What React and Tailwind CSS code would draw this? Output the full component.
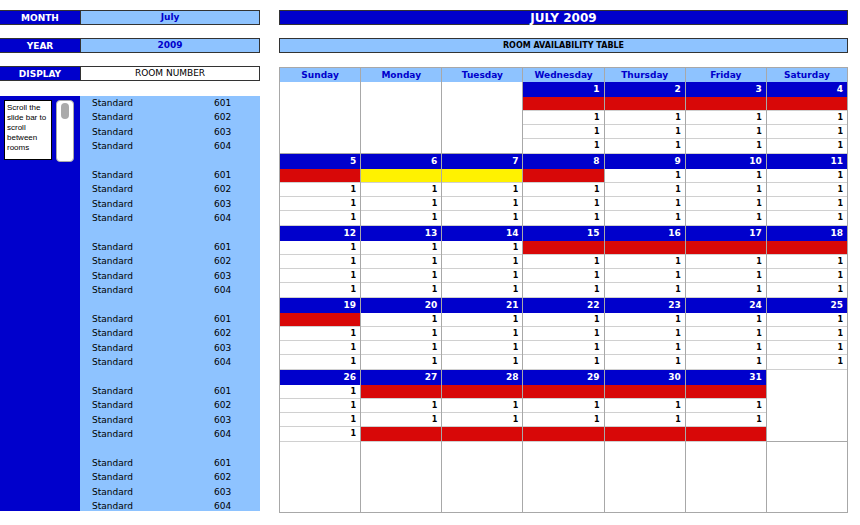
import React from "react";

const F = { fontFamily: '"DejaVu Sans", Verdana, sans-serif' };
const weeks = [
  [null, null, null, 1, 2, 3, 4],
  [5, 6, 7, 8, 9, 10, 11],
  [12, 13, 14, 15, 16, 17, 18],
  [19, 20, 21, 22, 23, 24, 25],
  [26, 27, 28, 29, 30, 31, null],
];
const days = ["Sunday", "Monday", "Tuesday", "Wednesday", "Thursday", "Friday", "Saturday"];

function status(d, r) {
  if (r === 0) {
    if ([1, 2, 3, 4, 5, 8, 15, 16, 17, 18, 19, 27, 28, 29, 30, 31].includes(d)) return "red";
    if (d === 6 || d === 7) return "yellow";
  }
  if (r === 3 && d >= 27) return "red";
  return "1";
}

function DayCell({ d }) {
  if (d === null) return <div className="h-[72px] bg-white border-r border-b border-[#a8a8a8]" />;
  return (
    <div className="h-[72px] flex flex-col border-r border-[#a8a8a8]">
      <div className="h-[15px] bg-[#0000cc] text-white text-[9px] font-bold text-right pr-1 leading-[15px]">{d}</div>
      {[0, 1, 2, 3].map((r) => {
        const s = status(d, r);
        const bg = s === "red" ? "bg-[#d80808]" : s === "yellow" ? "bg-[#fff200]" : "bg-white";
        return (
          <div key={r} className={`${r === 3 ? "h-[15px]" : "h-[14px]"} ${bg} text-[8px] font-bold text-right pr-1 leading-[14px] text-black border-b border-[#d0d0d0]`}>
            {s === "1" ? "1" : ""}
          </div>
        );
      })}
    </div>
  );
}

export default function App() {
  const groups = [0, 1, 2, 3, 4, 5];
  return (
    <div style={F} className="w-[860px] h-[525px] bg-white flex pt-[10px] overflow-hidden">
      <div className="w-[260px] flex flex-col">
        {[["MONTH", "July", true], ["YEAR", "2009", true], ["DISPLAY", "ROOM NUMBER", false]].map(([l, v, lb], i) => (
          <div key={l} className={`flex h-[15px] ${i > 0 ? "mt-[13px]" : ""}`}>
            <div className="w-[80px] bg-[#0000cc] text-white text-[9px] font-bold text-center leading-[15px] border-y border-[#333]">{l}</div>
            <div className={`flex-1 ${lb ? "bg-[#8ec3ff] text-[#0000cc] font-bold" : "bg-white text-black"} text-[9px] text-center leading-[13px] border border-[#333]`}>{v}</div>
          </div>
        ))}
        <div className="mt-[15px] flex h-[415px]">
          <div className="w-[80px] bg-[#0000cc] flex items-start gap-[4px] pl-[4px] pt-[4px]">
            <div className="w-[48px] h-[60px] bg-white border border-black text-[8px] leading-[10px] px-[2px] pt-[2px] text-black" style={{ fontFamily: '"Liberation Sans", Arial, sans-serif' }}>
              Scroll the slide bar to scroll between rooms
            </div>
            <div className="w-[18px] h-[62px] bg-white border border-[#aaa] rounded-sm flex justify-center pt-[2px]">
              <div className="w-[8px] h-[16px] bg-[#aaa] rounded-full" />
            </div>
          </div>
          <div className="flex-1 bg-[#8ec3ff] overflow-hidden">
            {groups.map((g) => (
              <div key={g} className="h-[72px]">
                {[601, 602, 603, 604].map((n) => (
                  <div key={n} className="h-[14.4px] flex text-[9px] leading-[14.4px] text-black">
                    <span className="w-[134px] pl-[12px]">Standard</span>
                    <span>{n}</span>
                  </div>
                ))}
              </div>
            ))}
          </div>
        </div>
      </div>
      <div className="w-[569px] ml-[19px] flex flex-col">
        <div className="h-[15px] bg-[#0000cc] text-white text-[12px] font-bold text-center leading-[15px] border border-[#333]">JULY 2009</div>
        <div className="h-[15px] mt-[13px] bg-[#8ec3ff] text-black text-[8px] font-bold text-center leading-[13px] border border-[#333]">ROOM AVAILABILITY TABLE</div>
        <div className="mt-[14px] border-l border-[#a8a8a8]">
          <div className="grid grid-cols-7 h-[15px]">
            {days.map((d) => (
              <div key={d} className="bg-[#8ec3ff] text-[#0000cc] text-[9px] font-bold text-center leading-[15px] border-r border-t border-[#a8a8a8]">{d}</div>
            ))}
          </div>
          {weeks.map((w, i) => (
            <div key={i} className="grid grid-cols-7">
              {w.map((d, j) => (
                <DayCell key={j} d={d} />
              ))}
            </div>
          ))}
          <div className="grid grid-cols-7">
            {days.map((d) => (
              <div key={d} className="h-[71px] bg-white border-r border-b border-[#a8a8a8]" />
            ))}
          </div>
        </div>
      </div>
    </div>
  );
}
